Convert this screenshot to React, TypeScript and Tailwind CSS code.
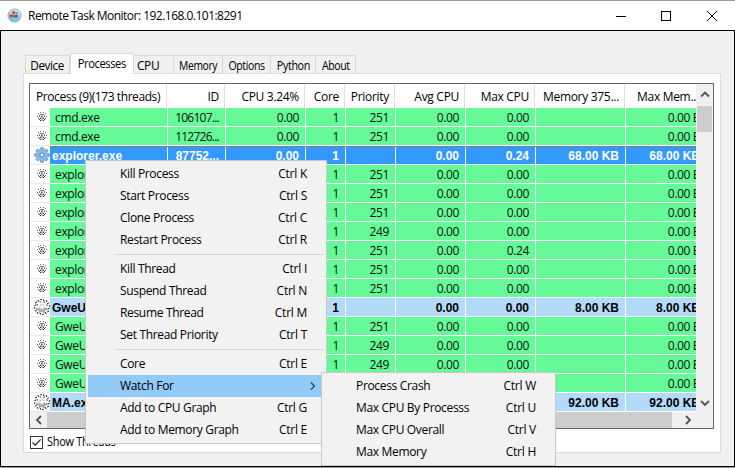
import React from "react";

type Row = {
  name: string;
  kind: "thread" | "process" | "selected";
  id?: string;
  priority?: string;
  maxCpu: string;
  mem?: string;
};

const rows: Row[] = [
  { name: "cmd.exe", kind: "thread", id: "106107...", priority: "251", maxCpu: "0.00" },
  { name: "cmd.exe", kind: "thread", id: "112726...", priority: "251", maxCpu: "0.00" },
  { name: "explorer.exe", kind: "selected", id: "87752...", maxCpu: "0.24", mem: "68.00 KB" },
  { name: "explorer.exe", kind: "thread", priority: "251", maxCpu: "0.00" },
  { name: "explorer.exe", kind: "thread", priority: "251", maxCpu: "0.00" },
  { name: "explorer.exe", kind: "thread", priority: "251", maxCpu: "0.00" },
  { name: "explorer.exe", kind: "thread", priority: "249", maxCpu: "0.00" },
  { name: "explorer.exe", kind: "thread", priority: "251", maxCpu: "0.24" },
  { name: "explorer.exe", kind: "thread", priority: "251", maxCpu: "0.00" },
  { name: "explorer.exe", kind: "thread", priority: "251", maxCpu: "0.00" },
  { name: "GweUI.exe", kind: "process", maxCpu: "0.00", mem: "8.00 KB" },
  { name: "GweUI.exe", kind: "thread", priority: "251", maxCpu: "0.00" },
  { name: "GweUI.exe", kind: "thread", priority: "249", maxCpu: "0.00" },
  { name: "GweUI.exe", kind: "thread", priority: "249", maxCpu: "0.00" },
  { name: "GweUI.exe", kind: "thread", priority: "249", maxCpu: "0.00" },
  { name: "MA.exe", kind: "process", maxCpu: "0.00", mem: "92.00 KB" },
];

function AppIcon() {
  return (
    <svg width="15" height="15" viewBox="0 0 15 15">
      <circle cx="7.5" cy="7.5" r="6.7" fill="#a9cbd8" stroke="#a3b5bd" strokeWidth="0.8" />
      <path d="M2.3 4.5C4.5 .8 10.5 .4 13 5L13.2 8L9.5 6L6 4Z" fill="#d3dfe4" />
      <path d="M1.2 9.5L5 9.5L9 11L13.6 9.5C12.5 12.3 10.3 14 7.5 14C4.5 13.8 2 12 1.2 9.5Z" fill="#7cc6dc" />
      <path d="M5.3 3H8V6.2H5.3Z" fill="#d8513f" />
      <path d="M2.5 6.6H6V9.4H2.5Z" fill="#e0402c" />
      <path d="M6.2 7H11V9.6H6.2Z" fill="#2c78bd" />
      <path d="M8.5 3.5L11.5 5L10 6.5H8.5Z" fill="#5d9bc6" />
    </svg>
  );
}

function GearIcon({ blue }: { blue?: boolean }) {
  const teeth = [0, 45, 90, 135, 180, 225, 270, 315];
  return (
    <svg width="16" height="16" viewBox="0 0 16 16" className="shrink-0">
      {blue ? (
        <>
          {teeth.map((a) => (
            <path key={a} d="M6.2 4L6.7 .7H9.3L9.8 4Z" transform={`rotate(${a} 8 8)`} fill="#86bbe8" stroke="#4a8bc2" strokeWidth="0.7" />
          ))}
          <circle cx="8" cy="8" r="5.4" fill="#86bbe8" />
          <circle cx="8" cy="8" r="2" fill="#fff" stroke="#397bb4" strokeWidth="0.9" />
        </>
      ) : (
        <>
          {teeth.map((a) => (
            <path key={a} d="M6 4L6.4 .6H9.6L10 4" transform={`rotate(${a} 8 8)`} fill="#fff" stroke="#000" strokeWidth="1" strokeDasharray="1.6 1.6" />
          ))}
          <circle cx="8" cy="8" r="4.8" fill="#f7f7f7" />
          <path d="M3.5 10.5A5 5 0 0 0 12.5 10.5L11 8.5L8 11L5 9Z" fill="#aaa" />
          <circle cx="8" cy="8" r="2.2" fill="#fff" stroke="#888" strokeWidth="0.9" strokeDasharray="1.5 1" />
        </>
      )}
    </svg>
  );
}

function ThreadIcon() {
  return (
    <svg width="10" height="10" viewBox="0 0 10 10" shapeRendering="crispEdges">
      <path d="M3 0H4V1H3ZM6 0H7V1H6ZM1 1H2V2H1ZM8 1H9V2H8ZM0 4H1V5H0ZM9 4H10V5H9ZM1 6H2V7H1ZM8 6H9V7H8Z" fill="#666" />
      <path d="M3 2H7V3H3ZM2 3H3V5H2ZM7 3H8V5H7Z" fill="#777" />
      <path d="M4 3H6V5H4ZM3 5H7V6H3ZM4 6H6V9H4Z" fill="#bbb" />
      <path d="M2 7H3V8H2ZM7 7H8V8H7ZM3 6H4V7H3ZM6 6H7V7H6ZM3 8H4V9H3ZM6 8H7V9H6ZM4 4H5V5H4Z" fill="#333" />
    </svg>
  );
}

function Chevron({ d, thin }: { d: string; thin?: boolean }) {
  return (
    <svg width="10" height="10" viewBox="0 0 10 10" fill="none">
      <path d={d} stroke={thin ? "#333" : "#555"} strokeWidth={thin ? 1.1 : 1.9} />
    </svg>
  );
}

function ProcessRow({ row }: { row: Row }) {
  const thread = row.kind === "thread";
  const tone = thread
    ? "bg-[#66f998] text-[#06140c] leading-[20px]"
    : row.kind === "selected"
      ? "bg-[#3399ff] text-white font-bold font-['Liberation_Sans',sans-serif] leading-[20px]"
      : "bg-[#b4dafa] text-black font-bold font-['Liberation_Sans',sans-serif] leading-[20px]";
  const values = [row.id ?? "", "0.00", "1", row.priority ?? "", "0.00", row.maxCpu, row.mem ?? "", row.mem ?? "0.00 B"];
  return (
    <div className="relative h-[19px] flex w-[676px]">
      <div className="w-5 h-[19px] shrink-0 flex items-center justify-center border-b border-[#e8e8e8]">
        {thread ? (
          <div className="ml-[3px] flex"><ThreadIcon /></div>
        ) : (
          <div className="ml-[4px] flex"><GearIcon blue={row.kind === "selected"} /></div>
        )}
      </div>
      <div className="w-[656px] h-[19px] grid grid-cols-[118px_58px_80px_40px_50px_70px_70px_90px_80px]">
        <div className={`h-[18px] ${tone} border-r border-r-[#f2fff6] whitespace-nowrap overflow-hidden ${thread ? "pl-[5px] tracking-[-0.35px]" : "pl-[2px]"}`}>
          {row.name}
        </div>
        {values.map((v, i) => (
          <div
            key={i}
            className={`h-[18px] border-r border-r-[#f2fff6] whitespace-nowrap text-right overflow-hidden ${tone} ${i === 7 ? "pr-[5px]" : "pr-[6px]"} ${thread ? (i === 0 ? "tracking-[-0.75px]" : "tracking-[-0.4px]") : ""}`}
          >
            {v}
          </div>
        ))}
      </div>
      {row.kind === "selected" && <div className="absolute left-5 right-0 top-0 border-t border-dotted border-[#cc6600]" />}
    </div>
  );
}

const headers = ["ID", "CPU 3.24%", "Core", "Priority", "Avg CPU", "Max CPU", "Memory 375...", "Max Mem..."];

type Item = [string, string] | null;
const mainItems: Item[] = [
  ["Kill Process", "Ctrl K"],
  ["Start Process", "Ctrl S"],
  ["Clone Process", "Ctrl C"],
  ["Restart Process", "Ctrl R"],
  null,
  ["Kill Thread", "Ctrl I"],
  ["Suspend Thread", "Ctrl N"],
  ["Resume Thread", "Ctrl M"],
  ["Set Thread Priority", "Ctrl T"],
  null,
  ["Core", "Ctrl E"],
  ["Watch For", ""],
  ["Add to CPU Graph", "Ctrl G"],
  ["Add to Memory Graph", "Ctrl E"],
];
const subItems: Item[] = [
  ["Process Crash", "Ctrl W"],
  ["Max CPU By Processs", "Ctrl U"],
  ["Max CPU Overall", "Ctrl V"],
  ["Max Memory", "Ctrl H"],
];

function Menu({ items, place }: { items: Item[]; place: string }) {
  return (
    <div className={`absolute ${place} bg-[#f2f2f2] border border-[#c8c8c8] py-[2px] px-[2px] text-black`}>
      {items.map((it, i) =>
        it ? (
          <div key={i} className={`h-[22px] flex items-center justify-between pl-[32px] pr-[17px] ${it[0] === "Watch For" ? "bg-[#91c9f7]" : ""}`}>
            <span className="tracking-[-0.33px]">{it[0]}</span>
            {it[1] ? <span className="tracking-[-0.25px]">{it[1]}</span> : <span className="-mr-[11px]"><Chevron thin d="M3 1.5L6.5 5L3 8.5" /></span>}
          </div>
        ) : (
          <div key={i} className="h-[7px] pt-[3px] pl-[27px]"><div className="h-px bg-[#d5d5d5]" /></div>
        ),
      )}
    </div>
  );
}

const tabs = [
  { t: "Device", w: "w-[45px] justify-center", s: "scale-x-[0.98]" },
  { t: "Processes", w: "", s: "" },
  { t: "CPU", w: "w-[40px] pl-[3px]", s: "" },
  { t: "Memory", w: "w-[49px] justify-center", s: "scale-x-[0.86]" },
  { t: "Options", w: "w-[48px] justify-center", s: "scale-x-[0.88]" },
  { t: "Python", w: "w-[45px] justify-center", s: "scale-x-[0.9]" },
  { t: "About", w: "w-[40px] justify-center", s: "scale-x-[0.88]" },
];

export default function App() {
  return (
    <div className="relative w-[735px] h-[468px] flex flex-col bg-[#999] pt-px overflow-hidden text-[12px] leading-[16px] text-black font-['Open_Sans','Noto_Sans',sans-serif]">
      <header className="h-[29px] shrink-0 bg-white flex items-center pl-[7px] pr-[17px]">
        <AppIcon />
        <span className="ml-[6px] tracking-[-0.52px] flex-1">Remote Task Monitor: 192.168.0.101:8291</span>
        <svg width="102" height="12" viewBox="0 0 102 12" fill="none" stroke="#000" strokeWidth="1">
          <path d="M0 6.5H10M45.5 1.5H54.5V10.5H45.5Z" shapeRendering="crispEdges" />
          <path d="M91 1L101 11M101 1L91 11" />
        </svg>
      </header>
      <main className="h-[437px] shrink-0 border border-black bg-[#f0f0f0] pl-[22px] pt-[22px]">
        <nav className="relative z-10 flex items-end h-[20px] ml-[2px] tracking-[-0.45px]">
          {tabs.map(({ t, w, s }) =>
            t === "Processes" ? (
              <div key={t} className="w-[64px] h-[21px] -mb-px bg-white border border-b-0 border-[#d9d9d9] flex items-center justify-center">
                <span className="scale-x-[0.93]">{t}</span>
              </div>
            ) : (
              <div key={t} className={`h-[18px] border border-b-0 border-l-0 first:border-l border-[#d9d9d9] pt-[2px] flex items-center ${w}`}>
                <span className={s}>{t}</span>
              </div>
            ),
          )}
        </nav>
        <section className="w-[698px] h-[380px] bg-white border border-[#dcdcdc] pl-[5px] pt-[9px]">
          <div className="w-[685px] h-[346px] border border-[#646464] flex flex-col">
            <div className="flex h-[328px]">
              <div className="w-[666px] overflow-hidden">
                <div className="h-6 w-[675px] grid grid-cols-[137px_58px_80px_40px_50px_70px_70px_90px_80px] leading-[25px] tracking-[-0.3px]">
                  <div className="pl-[6px] tracking-[-0.42px] border-r border-[#e0e0e0] whitespace-nowrap">Process (9)(173 threads)</div>
                  {headers.map((h) => (
                    <div key={h} className="h-6 border-r border-[#e0e0e0] pr-[5px] text-right whitespace-nowrap">{h}</div>
                  ))}
                </div>
                {rows.map((r, i) => (
                  <ProcessRow key={i} row={r} />
                ))}
              </div>
              <div className="w-[17px] bg-[#f0f0f0] flex flex-col items-center">
                <div className="h-[22px] flex items-center"><Chevron d="M1 6.5L5 2.5L9 6.5" /></div>
                <div className="w-[15px] h-[26px] bg-[#cdcdcd]" />
                <div className="flex-1" />
                <div className="h-[18px] flex items-center"><Chevron d="M1 3L5 7L9 3" /></div>
              </div>
            </div>
            <div className="h-4 bg-[#f0f0f0] flex items-center">
              <div className="w-[17px] flex justify-center"><Chevron d="M7 1L3 5L7 9" /></div>
              <div className="w-[625px] h-4 bg-[#cdcdcd]" />
              <div className="w-[32px] flex justify-center"><Chevron d="M3 1L7 5L3 9" /></div>
            </div>
          </div>
          <label className="flex items-center pt-[5px] pl-px gap-1 tracking-[-0.3px]">
            <span className="w-[13px] h-[13px] border border-[#333] bg-white">
              <svg width="11" height="11" viewBox="0 0 11 11" fill="none"><path d="M1.5 5.5L4.2 8.2L9.7 2.3" stroke="#222" strokeWidth="1.2" /></svg>
            </span>
            <span className="origin-left scale-x-[0.91]">Show Threads</span>
          </label>
        </section>
      </main>
      <Menu items={mainItems} place="left-[85px] top-[160px] w-[242px] h-[284px]" />
      <Menu items={subItems} place="left-[321px] top-[372px] w-[235px] h-[94px]" />
    </div>
  );
}
